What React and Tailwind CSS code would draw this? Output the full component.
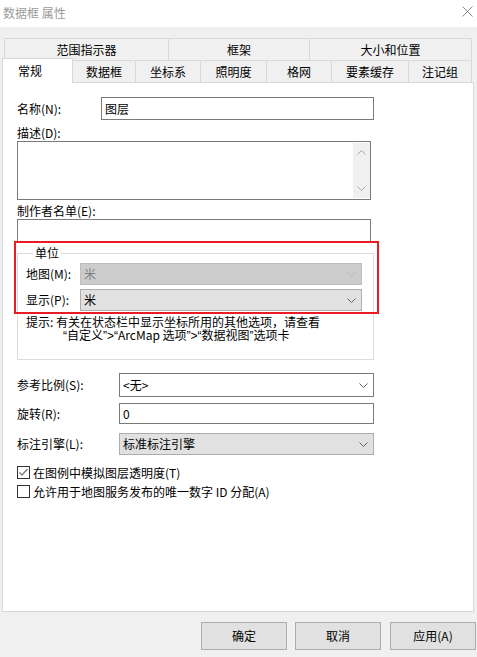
import React from "react";

const font = { fontFamily: '"Noto Sans CJK SC", "Noto Sans", sans-serif' };

function Chevron({ color = "#606060" }) {
  return (
    <svg width="9" height="5" viewBox="0 0 9 5" className="shrink-0">
      <path d="M0.5 0.5 L4.5 4.5 L8.5 0.5" fill="none" stroke={color} strokeWidth="1" />
    </svg>
  );
}

function Combo({ value, variant = "normal", className = "" }) {
  const styles = {
    normal: "bg-[#e1e1e1] border-[#adadad] text-black",
    disabled: "bg-[#cccccc] border-[#bfbfbf] text-[#838383]",
    editable: "bg-white border-[#7a7a7a] text-black",
  };
  return (
    <div
      className={`flex items-center justify-between border pl-[3px] pr-[5px] ${styles[variant]} ${className}`}
    >
      <span>{value}</span>
      <Chevron color={variant === "disabled" ? "#bdbdbd" : "#606060"} />
    </div>
  );
}

function CheckBox({ checked, label }) {
  return (
    <div className="flex items-center h-[13px]">
      <div className="w-[13px] h-[13px] border border-[#333333] bg-white flex items-center justify-center">
        {checked && (
          <svg width="11" height="11" viewBox="0 0 11 11">
            <path d="M1.5 5.5 L4 8 L9.5 2" fill="none" stroke="#7a7a7a" strokeWidth="1.3" />
          </svg>
        )}
      </div>
      <span className="ml-[3px] leading-[16px]">{label}</span>
    </div>
  );
}

// narrow latin quotes, as the dialog font draws them
function Q({ children }) {
  return <span className="font-['Liberation_Sans',sans-serif]">{children}</span>;
}

export default function App() {
  const row1 = [
    { t: "范围指示器", w: "w-[164px]" },
    { t: "框架", w: "w-[141px]" },
    { t: "大小和位置", w: "w-[163px] border-r" },
  ];
  const row2 = [
    { t: "数据框", w: "w-[63px]" },
    { t: "坐标系", w: "w-[65px]" },
    { t: "照明度", w: "w-[66px]" },
    { t: "格网", w: "w-[65px]" },
    { t: "要素缓存", w: "w-[77px]" },
    { t: "注记组", w: "w-[64px] border-r" },
  ];

  return (
    <div
      className="w-[477px] h-[657px] bg-[#f0f0f0] text-[12px] text-black overflow-hidden"
      style={font}
    >
      {/* title bar */}
      <div className="h-[27px] bg-white flex items-center justify-between pl-[3px] pr-[4px]">
        <span className="text-[#9a9a9a] text-[12px] leading-[16px] -mt-[2px]">数据框 属性</span>
        <svg width="11" height="11" viewBox="0 0 11 11" className="-mt-[5px]">
          <path d="M0.5 0.5 L10.5 10.5 M10.5 0.5 L0.5 10.5" stroke="#8a8a8a" strokeWidth="1" />
        </svg>
      </div>

      {/* tabs */}
      <div className="mt-[11px] pl-[4px]">
        <div className="flex h-[22px]">
          {row1.map((tab) => (
            <div
              key={tab.t}
              className={`${tab.w} h-[22px] border-t border-l border-[#d9d9d9] flex items-center justify-center leading-[16px]`}
            >
              {tab.t}
            </div>
          ))}
        </div>
        <div className="flex items-end h-[22px]">
          <div className="relative top-[1px] z-10 ml-[-2px] mr-[-1px] w-[71px] h-[25px] bg-white border-t border-l border-r border-[#d9d9d9] flex items-center pl-[15px] pb-[1px] leading-[16px]">
            常规
          </div>
          {row2.map((tab) => (
            <div
              key={tab.t}
              className={`${tab.w} h-[22px] border-t border-l border-[#d9d9d9] flex items-center justify-center leading-[16px]`}
            >
              {tab.t}
            </div>
          ))}
        </div>
      </div>

      {/* panel */}
      <div className="relative ml-[2px] w-[472px] h-[530px] bg-white border border-[#d9d9d9] pl-[14px] pt-[14px]">
        <div className="flex items-center h-[23px]">
          <span className="w-[84px] leading-[16px]">名称(N):</span>
          <div className="w-[273px] h-[23px] border border-[#7a7a7a] flex items-center pl-[3px] leading-[16px]">
            图层
          </div>
        </div>

        <div className="h-[21px] flex items-end leading-[16px]">描述(D):</div>
        <div className="w-[354px] h-[59px] border border-[#7a7a7a] flex justify-end pt-[1px] pb-[1px] pr-[0px]">
          <div className="w-[17px] h-full bg-[#f0f0f0] flex flex-col items-center justify-between py-[7px]">
            <svg width="9" height="5" viewBox="0 0 9 5">
              <path d="M0.5 4.5 L4.5 0.5 L8.5 4.5" fill="none" stroke="#a6a6a6" strokeWidth="1" />
            </svg>
            <svg width="9" height="5" viewBox="0 0 9 5">
              <path d="M0.5 0.5 L4.5 4.5 L8.5 0.5" fill="none" stroke="#a6a6a6" strokeWidth="1" />
            </svg>
          </div>
        </div>

        <div className="h-[19px] flex items-end leading-[16px]">制作者名单(E):</div>
        <div className="w-[354px] h-[23px] border border-[#7a7a7a]" />

        <fieldset className="mt-[4px] w-[357px] h-[114px] border border-[#dcdcdc] pl-[8px] pr-[11px] pb-0">
          <legend className="ml-[7px] px-[2px] leading-[14px]">单位</legend>
          <div className="flex items-center h-[22px] mt-[3px]">
            <span className="w-[54px] leading-[16px]">地图(M):</span>
            <Combo value="米" variant="disabled" className="w-[282px] h-[22px]" />
          </div>
          <div className="flex items-center h-[22px] mt-[4px]">
            <span className="w-[54px] leading-[16px]">显示(P):</span>
            <Combo value="米" className="w-[282px] h-[22px]" />
          </div>
          <div className="mt-[4px] leading-[13px]">
            <div>提示: 有关在状态栏中显示坐标所用的其他选项，请查看</div>
            <div className="pl-[37px]">
              <Q>“</Q>自定义<Q>”&gt;“</Q>ArcMap 选项<Q>”&gt;“</Q>数据视图<Q>”</Q>选项卡
            </div>
          </div>
        </fieldset>

        <div className="flex items-center h-[24px] mt-[13px]">
          <span className="w-[102px] leading-[16px]">参考比例(S):</span>
          <Combo value="<无>" variant="editable" className="w-[255px] h-[24px]" />
        </div>
        <div className="flex items-center h-[21px] mt-[6px]">
          <span className="w-[102px] leading-[16px]">旋转(R):</span>
          <div className="w-[255px] h-[21px] border border-[#7a7a7a] flex items-center pl-[3px]">0</div>
        </div>
        <div className="flex items-center h-[22px] mt-[9px]">
          <span className="w-[102px] leading-[16px]">标注引擎(L):</span>
          <Combo value="标准标注引擎" className="w-[255px] h-[22px]" />
        </div>

        <div className="mt-[11px]">
          <CheckBox checked label="在图例中模拟图层透明度(T)" />
        </div>
        <div className="mt-[6px]">
          <CheckBox label="允许用于地图服务发布的唯一数字 ID 分配(A)" />
        </div>

        {/* highlight box */}
        <div className="absolute left-[11px] top-[158px] w-[365px] h-[73px] border-2 border-[#e81c24] pointer-events-none" />
      </div>

      {/* buttons */}
      <div className="flex mt-[10px] pl-[201px]">
        <button className="w-[86px] h-[28px] bg-[#e1e1e1] border border-[#adadad]">确定</button>
        <button className="ml-[8px] w-[86px] h-[28px] bg-[#e1e1e1] border border-[#adadad]">取消</button>
        <button className="ml-[9px] w-[86px] h-[28px] bg-[#e1e1e1] border border-[#adadad]">应用(A)</button>
      </div>
    </div>
  );
}
